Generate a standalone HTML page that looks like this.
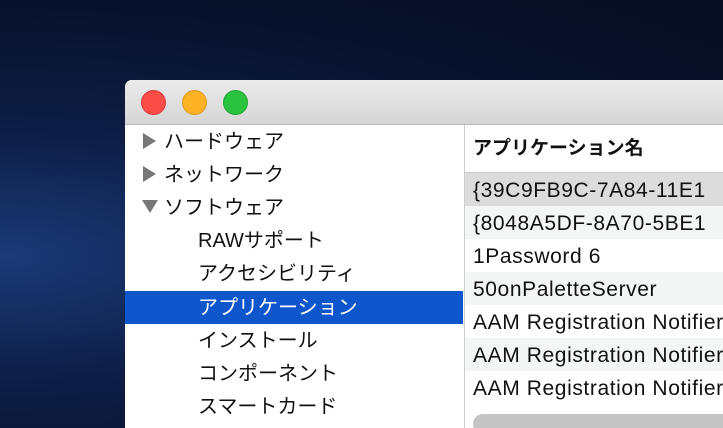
<!DOCTYPE html>
<html><head><meta charset="utf-8"><style>
html,body{margin:0;width:723px;height:428px;overflow:hidden}
body{background:radial-gradient(ellipse at 0% 60%,#1b3a78 0%,#0d1d44 35%,#08122c 70%,#060d20 100%);font-family:"Liberation Sans","Noto Sans CJK JP",sans-serif;position:relative}
.win{position:absolute;left:125px;top:80px;width:598px;height:348px;background:#fff;border-radius:7px 0 0 0;overflow:hidden}
.tb{height:44px;background:linear-gradient(#ebebeb,#d5d5d5);border-bottom:1px solid #b9b9b9}
.dot{position:absolute;top:10px;width:23px;height:23px;border-radius:50%}
.side{position:absolute;left:0;top:45px;width:338px;height:320px;background:#fff}
.row{position:absolute;left:0;width:338px;height:33px;line-height:34px;font-size:20px;color:#111}
.sel{background:#0f56cc;color:#fff}
.main{position:absolute;left:339px;top:45px;width:290px;height:320px;border-left:1px solid #ccc;background:#fff}
.r{position:absolute;left:0;width:290px;height:33px;line-height:35px;font-size:21px;letter-spacing:0.6px;padding-left:8px;color:#111;white-space:nowrap}
.tri{display:inline-block;width:0;height:0;border-top:8px solid transparent;border-bottom:8px solid transparent;border-left:13px solid #777;margin:0 8px 0 18px;vertical-align:-1px}
.trd{display:inline-block;width:0;height:0;border-left:8px solid transparent;border-right:8px solid transparent;border-top:13px solid #777;margin:0 6px 0 17px;vertical-align:1px}
</style></head><body>
<div class="win">
<div class="tb"></div>
<div class="dot" style="left:16px;background:#fc4c48;border:1px solid #de3a36"></div>
<div class="dot" style="left:57px;background:#fdb226;border:1px solid #df9b1e"></div>
<div class="dot" style="left:98px;background:#2ac33f;border:1px solid #1fa231"></div>
<div class="side">
<div class="row" style="top:0"><span class="tri"></span>ハードウェア</div>
<div class="row" style="top:33px"><span class="tri"></span>ネットワーク</div>
<div class="row" style="top:66px"><span class="trd"></span>ソフトウェア</div>
<div class="row" style="top:99px;padding-left:73px">RAWサポート</div>
<div class="row" style="top:132px;padding-left:73px">アクセシビリティ</div>
<div class="row sel" style="top:166px;padding-left:73px;width:265px">アプリケーション</div>
<div class="row" style="top:199px;padding-left:73px">インストール</div>
<div class="row" style="top:232px;padding-left:73px">コンポーネント</div>
<div class="row" style="top:265px;padding-left:73px">スマートカード</div>
</div>
<div class="main">
<div class="r" style="top:6px;font-weight:bold;font-size:19px;letter-spacing:0">アプリケーション名</div>
<div class="r" style="top:47px;background:#dcdcdc;border-top:1px solid #ccc">{39C9FB9C-7A84-11E1</div>
<div class="r" style="top:81px;background:#f4f5f5">{8048A5DF-8A70-5BE1</div>
<div class="r" style="top:114px">1Password 6</div>
<div class="r" style="top:147px;background:#f4f5f5">50onPaletteServer</div>
<div class="r" style="top:180px">AAM Registration Notifier</div>
<div class="r" style="top:213px;background:#f4f5f5">AAM Registration Notifier</div>
<div class="r" style="top:246px">AAM Registration Notifier</div>
<div style="position:absolute;left:8px;top:289px;width:280px;height:20px;background:#c4c4c4;border-radius:10px"></div>
</div>
</div>
</body></html>
